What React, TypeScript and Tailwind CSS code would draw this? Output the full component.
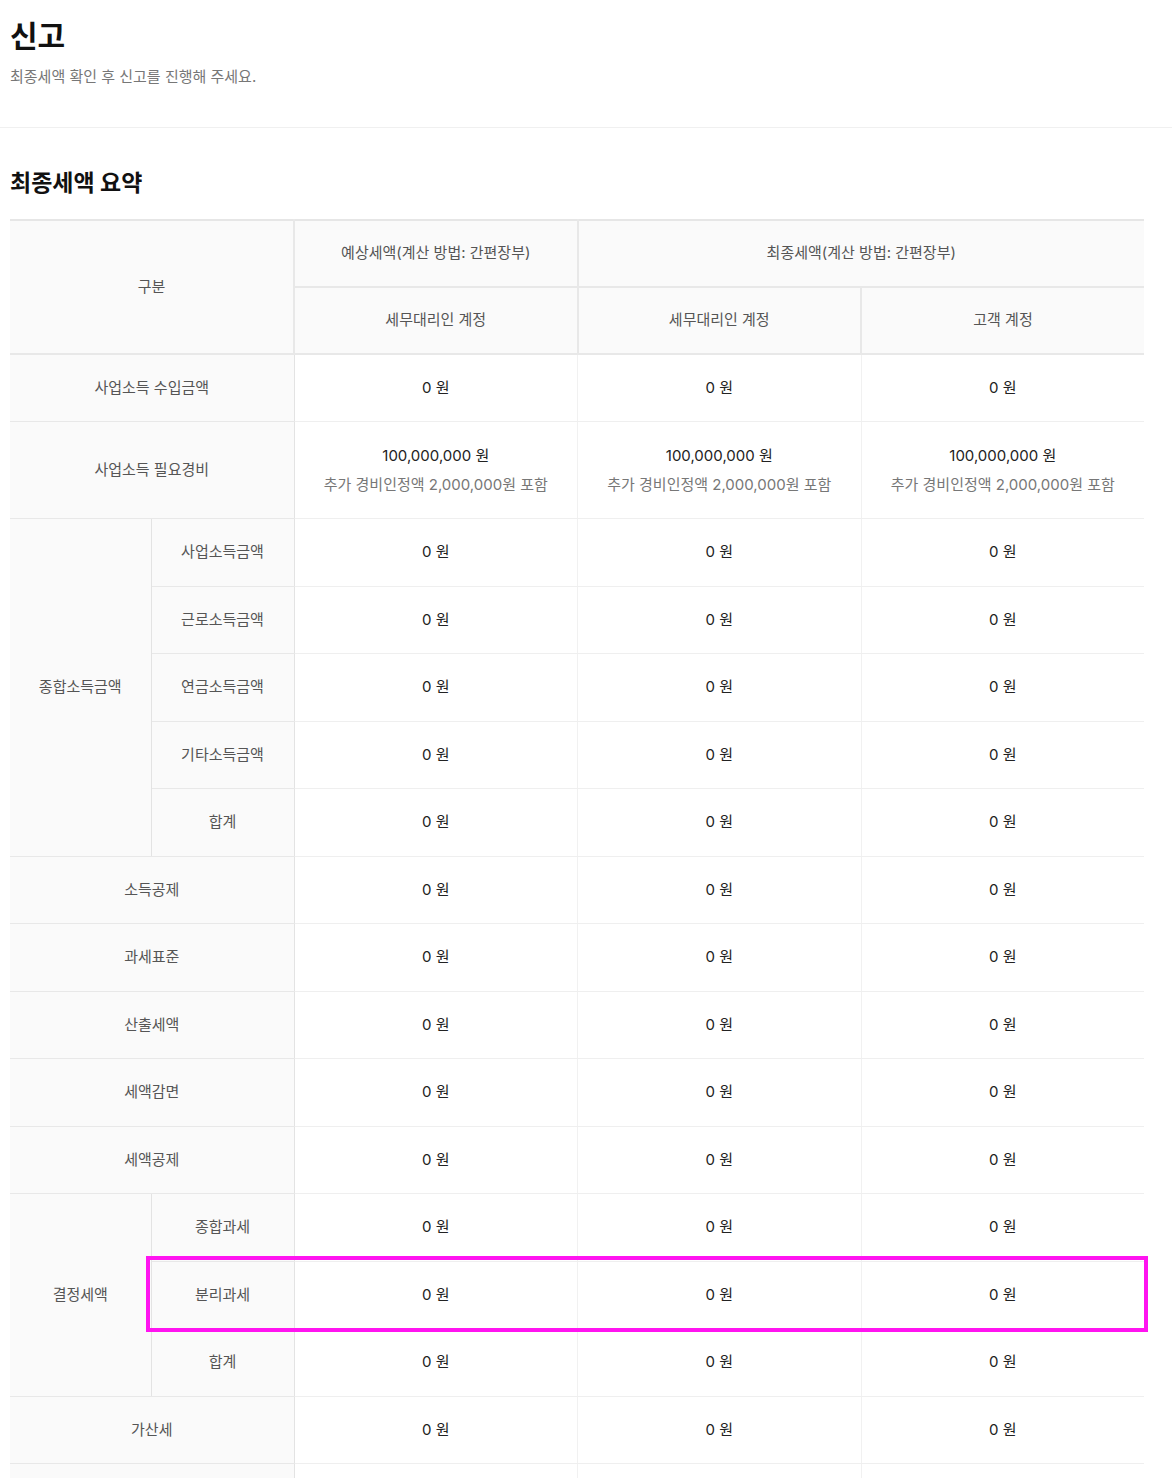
import React from "react";

const FONT = { fontFamily: 'Inter, "Noto Sans CJK KR", "Noto Sans", sans-serif' };

const zero = ["0 원", "0 원", "0 원"];

function ValueCells({ values }: { values: string[] }) {
  return (
    <>
      {values.map((v, i) => (
        <td
          key={i}
          className={`bg-white text-center text-[15px] font-normal text-[#222] border-b border-[#efefef] ${i < 2 ? "border-r border-r-[#f1f1f1]" : ""}`}
        >
          {v}
        </td>
      ))}
    </>
  );
}

function Label({ children, colSpan, rowSpan }: { children?: React.ReactNode; colSpan?: number; rowSpan?: number }) {
  return (
    <td
      colSpan={colSpan}
      rowSpan={rowSpan}
      className="bg-[#fafafa] text-center text-[15px] text-[#555] border-b border-[#e8e8e8] border-r border-r-[#e3e3e3]"
    >
      {children}
    </td>
  );
}

export default function App() {
  const simple = (label: string) => (
    <tr className="h-[67.5px]" key={label}>
      <Label colSpan={2}>{label}</Label>
      <ValueCells values={zero} />
    </tr>
  );

  const incomeSubs = ["사업소득금액", "근로소득금액", "연금소득금액", "기타소득금액", "합계"];
  const taxSubs = ["종합과세", "분리과세", "합계"];

  const expense = (
    <div className="flex flex-col items-center gap-[8px]">
      <span className="text-[15px] font-normal text-[#222] leading-[22px]">100,000,000 원</span>
      <span className="text-[15px] text-[#777] leading-[20px]">추가 경비인정액 2,000,000원 포함</span>
    </div>
  );

  return (
    <div className="min-h-screen bg-white" style={FONT}>
      <div className="h-[128px] border-b border-[#f0f0f0] px-[10px] pt-[16px]">
        <h1 className="text-[30px] leading-[40px] font-bold text-[#111]">신고</h1>
        <p className="mt-[11px] text-[15px] leading-[20px] text-[#777]">최종세액 확인 후 신고를 진행해 주세요.</p>
      </div>
      <div className="px-[10px] pt-[42px]">
        <h2 className="text-[23px] leading-[26px] font-bold text-[#111]">최종세액 요약</h2>
        <table className="mt-[23px] w-[1134px] table-fixed border-collapse border-t-2 border-[#e6e6e6]">
          <colgroup>
            <col className="w-[141px]" />
            <col className="w-[143px]" />
            <col className="w-[283.5px]" />
            <col className="w-[283.5px]" />
            <col className="w-[283px]" />
          </colgroup>
          <thead>
            <tr className="h-[67px]">
              <th rowSpan={2} colSpan={2} className="bg-[#fafafa] text-center text-[15px] font-normal text-[#555] border-b-2 border-r-2 border-[#e8e8e8]">
                구분
              </th>
              <th className="bg-[#fafafa] text-center text-[15px] font-normal text-[#555] border-b-2 border-r-2 border-[#e8e8e8]">
                예상세액(계산 방법: 간편장부)
              </th>
              <th colSpan={2} className="bg-[#fafafa] text-center text-[15px] font-normal text-[#555] border-b-2 border-[#e8e8e8]">
                최종세액(계산 방법: 간편장부)
              </th>
            </tr>
            <tr className="h-[67px]">
              <th className="bg-[#fafafa] text-center text-[15px] font-normal text-[#555] border-b-2 border-r-2 border-[#e8e8e8]">세무대리인 계정</th>
              <th className="bg-[#fafafa] text-center text-[15px] font-normal text-[#555] border-b-2 border-r-2 border-[#e8e8e8]">세무대리인 계정</th>
              <th className="bg-[#fafafa] text-center text-[15px] font-normal text-[#555] border-b-2 border-[#e8e8e8]">고객 계정</th>
            </tr>
          </thead>
          <tbody>
            {simple("사업소득 수입금액")}
            <tr className="h-[97px]">
              <Label colSpan={2}>사업소득 필요경비</Label>
              {[0, 1, 2].map((i) => (
                <td key={i} className={`bg-white text-center border-b border-[#efefef] ${i < 2 ? "border-r border-r-[#f1f1f1]" : ""}`}>
                  {expense}
                </td>
              ))}
            </tr>
            {incomeSubs.map((s, idx) => (
              <tr className="h-[67.5px]" key={"inc" + s}>
                {idx === 0 && <Label rowSpan={5}>종합소득금액</Label>}
                <Label>{s}</Label>
                <ValueCells values={zero} />
              </tr>
            ))}
            {simple("소득공제")}
            {simple("과세표준")}
            {simple("산출세액")}
            {simple("세액감면")}
            {simple("세액공제")}
            {taxSubs.map((s, idx) => (
              <tr className="h-[67.5px]" key={"tax" + s}>
                {idx === 0 && <Label rowSpan={3}>결정세액</Label>}
                <td className="relative bg-[#fafafa] text-center text-[15px] text-[#555] border-b border-[#e8e8e8] border-r border-r-[#e3e3e3]">
                  {s}
                  {idx === 1 && (
                    <div className="pointer-events-none absolute left-[-6px] top-[-6px] z-10 h-[76px] w-[1002px] border-[4px] border-[#ff14f0]" />
                  )}
                </td>
                <ValueCells values={zero} />
              </tr>
            ))}
            {simple("가산세")}
            <tr className="h-[67.5px]">
              <Label colSpan={2} />
              <ValueCells values={["", "", ""]} />
            </tr>
          </tbody>
        </table>
      </div>
    </div>
  );
}
